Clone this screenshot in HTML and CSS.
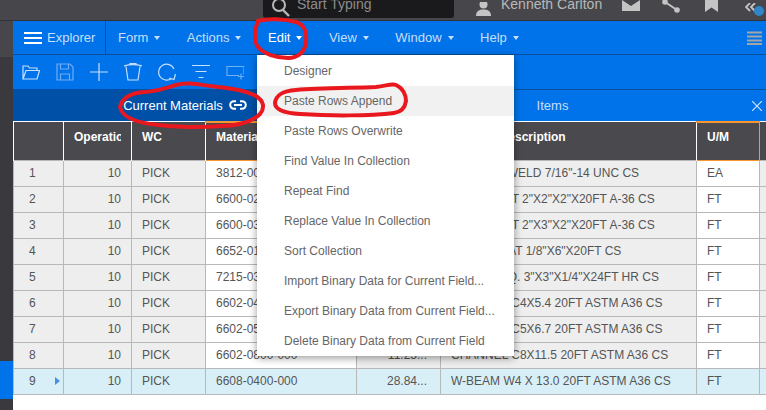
FILE: index.html
```html
<!DOCTYPE html>
<html lang="en">
<head>
    <meta charset="UTF-8">
    <meta name="viewport" content="width=device-width, initial-scale=1.0">
    <title>Current Materials</title>
    <link rel="stylesheet" href="styles.css">
</head>
<body>

<!-- Top bar, cut off by the screenshot -->
<header class="topbar">
    <div class="search">
        <svg class="search-icon" width="18" height="18" viewBox="0 0 18 18"><circle cx="7" cy="5" r="6" fill="none" stroke="#b8b8b8" stroke-width="2"/><path d="M11 10l6 6" stroke="#b8b8b8" stroke-width="2.4"/></svg>
        <span>Start Typing</span>
    </div>
    <div class="user">
        <svg width="15" height="14" viewBox="0 0 15 14"><circle cx="7.5" cy="2.5" r="4" fill="#c4c4c4"/><path d="M0 14c0-5 3-6.500 7.500-6.500S15 9 15 14z" fill="#c4c4c4"/></svg>
        <span>Kenneth Carlton</span>
    </div>
    <svg class="top-icon mail" width="18" height="11" viewBox="0 0 18 11"><path d="M0 0l9 6 9-6v11H0z" fill="#c4c4c4"/></svg>
    <svg class="top-icon share" width="18" height="13" viewBox="0 0 18 13"><path d="M3 2l12 8" stroke="#c4c4c4" stroke-width="2"/><circle cx="3" cy="2" r="2.800" fill="#c4c4c4"/><circle cx="15" cy="10" r="2.800" fill="#c4c4c4"/></svg>
    <svg class="top-icon mark" width="13" height="12" viewBox="0 0 13 12"><path d="M0 0h13v12l-6.500-4.500L0 12z" fill="#c4c4c4"/></svg>
    <div class="collapse">
        <svg width="12" height="10" viewBox="0 0 12 10"><path d="M5 0L1 4l4 4M10 0L6 4l4 4" fill="none" stroke="#c4c4c4" stroke-width="1.800"/></svg>
        <span class="dot"></span>
    </div>
</header>

<div class="main">
    <aside class="rail">
        <div class="rail-top"></div>
        <div class="rail-active"></div>
    </aside>

    <div class="content">
        <!-- Menu bar -->
        <nav class="nav">
            <div class="explorer">
                <svg width="18" height="12" viewBox="0 0 18 12"><path d="M0 1h18M0 6h18M0 11h18" stroke="#fff" stroke-width="2"/></svg>
                <span>Explorer</span>
            </div>
            <ul class="nav-items">
                <li>Form<i class="caret"></i></li>
                <li>Actions<i class="caret"></i></li>
                <li class="open">Edit<i class="caret"></i></li>
                <li>View<i class="caret"></i></li>
                <li>Window<i class="caret"></i></li>
                <li>Help<i class="caret"></i></li>
            </ul>
            <svg class="nav-more" width="15" height="14" viewBox="0 0 15 14"><path d="M0 1.500h15M0 5.500h15M0 9.500h15M0 13h15" stroke="#a5a5a5" stroke-width="2"/></svg>
        </nav>

        <!-- Toolbar -->
        <div class="toolbar">
            <svg class="tool" width="18" height="18" viewBox="0 0 18 18"><path d="M1 16V3h5l1.500 2H15v2.500M1 16l3-8.500h13.500L15 16z"/></svg>
            <svg class="tool dim" width="18" height="18" viewBox="0 0 18 18"><path d="M1 1h13l3 3v13H1zM4.500 1v5h8V1M4.500 17v-6h9v6"/></svg>
            <svg class="tool" width="18" height="18" viewBox="0 0 18 18"><path d="M9 0v18M0 9h18"/></svg>
            <svg class="tool" width="18" height="18" viewBox="0 0 18 18"><path d="M0 3c5-1.500 13-1.500 18 0M6 2V.500h6V2M2 3.500L4 17h10l2-13.500"/></svg>
            <svg class="tool" width="18" height="18" viewBox="0 0 18 18"><path d="M13.500 15.500A8 8 0 1 1 16 6M17.500 11l-1.500 5.500-5-1.500"/></svg>
            <svg class="tool" width="18" height="18" viewBox="0 0 18 18"><path d="M0 2.500h18M3.500 8.500h11M6.500 14.500h5"/></svg>
            <svg class="tool dim" width="18" height="18" viewBox="0 0 18 18"><path d="M13 12.500H1v-9h17v8M15 10.500v6M12 13.500h6"/></svg>
        </div>

        <!-- Tabs -->
        <div class="tabs">
            <div class="tab tab-current">
                <span>Current Materials</span>
                <svg width="18" height="10" viewBox="0 0 18 10"><path d="M7 1.200H5a3.800 3.800 0 0 0 0 7.600h2M11 1.200h2a3.800 3.800 0 0 1 0 7.600h-2M5 5h8" fill="none" stroke="#fff" stroke-width="2"/></svg>
            </div>
            <div class="tab tab-items">
                <span>Items</span>
                <svg class="tab-close" width="10" height="10" viewBox="0 0 10 10"><path d="M0 0l10 10M10 0L0 10" stroke="#cfe3ff" stroke-width="1.200"/></svg>
            </div>
        </div>

        <!-- Grid -->
        <table class="grid">
            <colgroup>
                <col class="c-num"><col class="c-op"><col class="c-wc"><col class="c-mat"><col class="c-qty"><col class="c-desc"><col class="c-um"><col class="c-end">
            </colgroup>
            <thead>
                <tr>
                    <th></th>
                    <th><div class="clip">Operation</div></th>
                    <th>WC</th>
                    <th class="sorted">Material</th>
                    <th></th>
                    <th>Material Description</th>
                    <th class="sorted">U/M</th>
                    <th></th>
                </tr>
            </thead>
            <tbody>
                <tr><td class="num">1</td><td class="op">10</td><td class="ro">PICK</td><td>3812-0000-000</td><td class="ro qty"></td><td class="ro">NUT HEX WELD 7/16"-14 UNC CS</td><td>EA</td><td class="ro"></td></tr>
                <tr><td class="num">2</td><td class="op">10</td><td class="ro">PICK</td><td>6600-0200-000</td><td class="ro qty"></td><td class="ro">TUBE RECT 2"X2"X2"X20FT A-36 CS</td><td>FT</td><td class="ro"></td></tr>
                <tr><td class="num">3</td><td class="op">10</td><td class="ro">PICK</td><td>6600-0300-000</td><td class="ro qty"></td><td class="ro">TUBE RECT 2"X3"X2"X20FT A-36 CS</td><td>FT</td><td class="ro"></td></tr>
                <tr><td class="num">4</td><td class="op">10</td><td class="ro">PICK</td><td>6652-0100-000</td><td class="ro qty"></td><td class="ro">SHEET FLAT 1/8"X6"X20FT CS</td><td>FT</td><td class="ro"></td></tr>
                <tr><td class="num">5</td><td class="op">10</td><td class="ro">PICK</td><td>7215-0300-000</td><td class="ro qty"></td><td class="ro">TUBING SQ. 3"X3"X1/4"X24FT HR CS</td><td>FT</td><td class="ro"></td></tr>
                <tr><td class="num">6</td><td class="op">10</td><td class="ro">PICK</td><td>6602-0400-000</td><td class="ro qty"></td><td class="ro">CHANNEL C4X5.4 20FT ASTM A36 CS</td><td>FT</td><td class="ro"></td></tr>
                <tr><td class="num">7</td><td class="op">10</td><td class="ro">PICK</td><td>6602-0500-000</td><td class="ro qty"></td><td class="ro">CHANNEL C5X6.7 20FT ASTM A36 CS</td><td>FT</td><td class="ro"></td></tr>
                <tr><td class="num">8</td><td class="op">10</td><td class="ro">PICK</td><td>6602-0800-000</td><td class="ro qty">11.25...</td><td class="ro">CHANNEL C8X11.5 20FT ASTM A36 CS</td><td>FT</td><td class="ro"></td></tr>
                <tr class="current"><td class="num">9<i class="row-arrow"></i></td><td class="op">10</td><td>PICK</td><td>6608-0400-000</td><td class="qty">28.84...</td><td>W-BEAM W4 X 13.0 20FT ASTM A36 CS</td><td>FT</td><td></td></tr>
            </tbody>
        </table>
    </div>
</div>

<!-- Edit dropdown -->
<ul class="menu">
    <li>Designer</li>
    <li class="hover">Paste Rows Append</li>
    <li>Paste Rows Overwrite</li>
    <li>Find Value In Collection</li>
    <li>Repeat Find</li>
    <li>Replace Value In Collection</li>
    <li>Sort Collection</li>
    <li>Import Binary Data for Current Field...</li>
    <li>Export Binary Data from Current Field...</li>
    <li>Delete Binary Data from Current Field</li>
</ul>

<!-- Red pen marks drawn on the screenshot -->
<svg class="marks" width="766" height="410" viewBox="0 0 766 410">
    <path d="M258 21C254 30 254 42 258 47C264 54 276 58 288 58C298 58 305 52 306 42C307 32 305 25 296 22C285 19 268 18 258 21Z"/>
    <path d="M120 107C122 98 130 93 145 92C158 91 166 88 176 85C186 82 196 84 210 86C228 88 245 90 256 96C264 101 265 108 260 114C252 122 238 126 220 126C200 128 178 127 158 125C138 123 122 118 120 107Z"/>
    <path d="M275 103C276 95 282 91 296 90C320 88 352 88 376 87C386 86 392 83 396 85C403 88 406 95 406 101C405 108 401 112 394 113C370 116 330 116 300 114C284 113 275 110 275 103Z"/>
</svg>

</body>
</html>
```

FILE: styles.css
```css
* {
    box-sizing: border-box;
}

body {
    position: relative;
    width: 766px;
    height: 410px;
    margin: 0;
    overflow: hidden;
    font-family: "Liberation Sans", Arial, sans-serif;
    font-size: 12px;
    background-color: #3a3a3e;
}

/* top bar */
.topbar {
    display: flex;
    align-items: flex-end;
    height: 21px;
    padding-left: 263px;
    background-color: #46464b;
    border-bottom: 1px solid #333337;
    overflow: hidden;
    color: #b9b9b9;
    font-size: 14px;
}

.search {
    display: flex;
    flex: none;
    align-items: center;
    gap: 7px;
    width: 191px;
    height: 18px;
    margin-bottom: 2px;
    padding: 0 0 11px 9px;
    background-color: #1a1a1c;
    border-radius: 0 0 3px 3px;
    color: #8c8c8c;
}

.search-icon {
    flex: none;
    margin-bottom: -11px;
}

.user {
    display: flex;
    flex: none;
    align-items: center;
    gap: 10px;
    width: 168px;
    height: 18px;
    margin-bottom: 2px;
    padding: 0 0 11px 22px;
}

.user svg {
    flex: none;
    margin-bottom: -11px;
}

.top-icon {
    flex: none;
    margin-bottom: 9px;
}

.mail {
    margin-right: 22px;
}

.share {
    margin-right: 25px;
    margin-bottom: 7px;
}

.mark {
    margin-right: 27px;
    margin-bottom: 8px;
}

.collapse {
    position: relative;
    width: 21px;
    height: 18px;
    margin-bottom: 2px;
}

.collapse svg {
    margin-top: -2px;
}

.dot {
    position: absolute;
    left: 9px;
    top: 6px;
    width: 10px;
    height: 10px;
    border-radius: 50%;
    background-color: #2f86c8;
}

/* page body */
.main {
    display: flex;
    height: 389px;
}

.rail {
    flex: none;
    width: 13px;
    background-color: #3a3a3e;
}

.rail-top {
    height: 36px;
    background-color: #47474b;
}

.rail-active {
    height: 38px;
    margin-top: 304px;
    background-color: #0073ea;
}

.content {
    flex: 1;
    min-width: 0;
    background-color: #fff;
}

/* nav */
.nav {
    display: flex;
    align-items: center;
    height: 34px;
    background-color: #0073ea;
    border-bottom: 1px solid #0a4f9c;
    color: #c6dffc;
    font-size: 13px;
}

.explorer {
    display: flex;
    align-items: center;
    gap: 5px;
    width: 93px;
    height: 33px;
    padding-left: 11px;
    border-right: 1px solid #0a4f9c;
}

.nav-items {
    display: flex;
    flex: 1;
    gap: 26.500px;
    margin: 0;
    padding: 0 0 0 12px;
    list-style: none;
}

.nav-items .open {
    color: #fff;
}

.caret {
    display: inline-block;
    margin-left: 6px;
    vertical-align: 2px;
    border-top: 4px solid currentColor;
    border-left: 3.500px solid transparent;
    border-right: 3.500px solid transparent;
}

.nav-more {
    margin-right: 4px;
}

/* toolbar */
.toolbar {
    display: flex;
    align-items: center;
    gap: 16px;
    height: 34px;
    padding-left: 9px;
    background-color: #0073ea;
}

.tool {
    fill: none;
    stroke: #c6dffc;
    stroke-width: 1.200;
}

.tool.dim {
    stroke: #6eaef5;
}

/* tabs */
.tabs {
    display: flex;
    height: 32px;
    font-size: 13px;
}

.tab {
    display: flex;
    align-items: center;
    justify-content: center;
}

.tab-current {
    gap: 6px;
    width: 344px;
    background-color: #0050a8;
    color: #fff;
}

.tab-items {
    position: relative;
    flex: 1;
    padding-right: 18px;
    background-color: #0073ea;
    border-top: 1px solid #0a4f9c;
    color: #c6dffc;
}

.tab-close {
    position: absolute;
    right: 4px;
    top: 11px;
}

/* grid */
.grid {
    width: 753px;
    border-collapse: collapse;
    table-layout: fixed;
    color: #555;
    font-size: 12px;
}

.c-num { width: 50px; }
.c-op { width: 68px; }
.c-wc { width: 74px; }
.c-mat { width: 151px; }
.c-qty { width: 84px; }
.c-desc { width: 256px; }
.c-um { width: 63px; }
.c-end { width: 7px; }

.grid th {
    height: 38px;
    padding: 0 10px 8px;
    overflow: hidden;
    background-color: #4a494e;
    border-left: 1px solid #fff;
    border-right: 1px solid #fff;
    color: #fff;
    text-align: left;
    white-space: nowrap;
}

.grid th.sorted {
    border: 1px solid #f7962f;
    border-top-width: 2px;
}

.clip {
    overflow: hidden;
}

.grid td {
    height: 26px;
    padding: 0 10px;
    overflow: hidden;
    border: 1px solid #b8b8b8;
    white-space: nowrap;
}

.grid td:last-child,
.grid th:last-child {
    padding: 0;
    border-right: none;
}

.grid .num {
    position: relative;
    padding-left: 15px;
    background-color: #eee;
}

.grid .op {
    background-color: #eee;
    text-align: right;
}

.grid .ro {
    background-color: #eee;
}

.grid .qty {
    padding-right: 13px;
    text-align: right;
}

.grid .current td {
    background-color: #d9eff7;
}

.row-arrow {
    position: absolute;
    left: 41px;
    top: 8px;
    border-left: 5px solid #4a90e2;
    border-top: 4.500px solid transparent;
    border-bottom: 4.500px solid transparent;
}

/* dropdown */
.menu {
    position: absolute;
    left: 257px;
    top: 55px;
    width: 257px;
    height: 301px;
    margin: 0;
    padding: 1px 0 0;
    list-style: none;
    background-color: #fff;
    box-shadow: 0 2px 8px rgba(0, 0, 0, 0.4);
    color: #666;
    font-size: 12px;
}

.menu li {
    height: 30px;
    padding-left: 27px;
    line-height: 30px;
}

.menu .hover {
    background-color: #f1f1f1;
}

/* pen marks */
.marks {
    position: absolute;
    left: 0;
    top: 0;
    fill: none;
    stroke: #e8181e;
    stroke-width: 4;
    stroke-linecap: round;
}
```
